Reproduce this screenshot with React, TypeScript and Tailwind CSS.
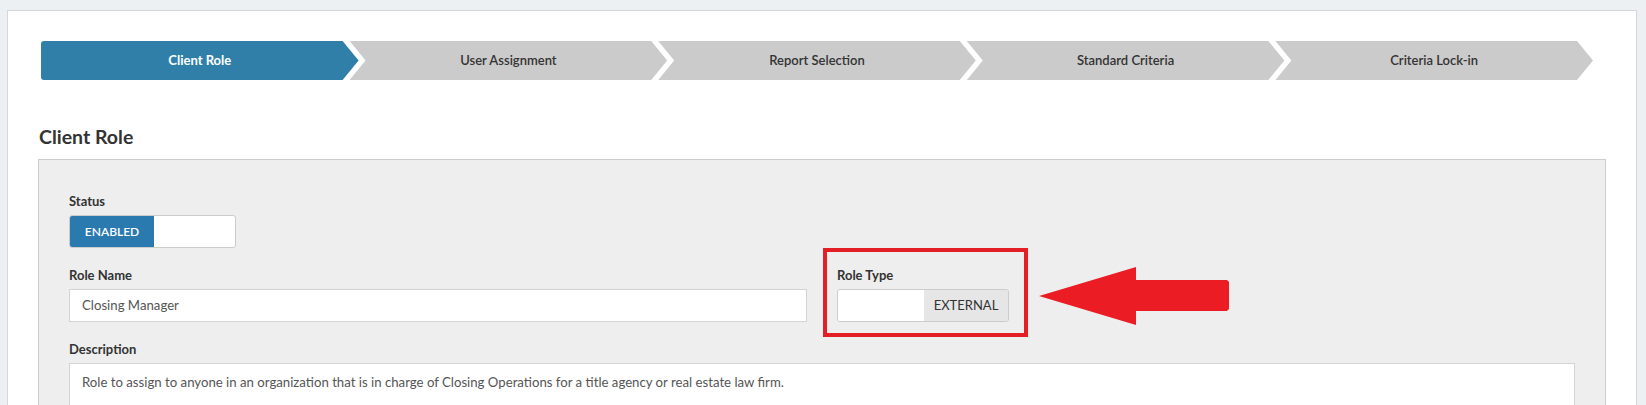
const FONT = { fontFamily: "Lato, 'Open Sans', Arial, sans-serif" };

const STEPS = [
  { label: "Client Role", cls: "bg-[#2f7fa9] text-white font-bold rounded-l-[3px] [clip-path:polygon(0_0,calc(100%_-_16px)_0,100%_50%,calc(100%_-_16px)_100%,0_100%)]" },
  { label: "User Assignment", cls: "bg-[#cbcbcb] text-[#333] font-semibold -ml-[9px] [clip-path:polygon(0_0,calc(100%_-_16px)_0,100%_50%,calc(100%_-_16px)_100%,0_100%,16px_50%)]" },
  { label: "Report Selection", cls: "bg-[#cbcbcb] text-[#333] font-semibold -ml-[9px] [clip-path:polygon(0_0,calc(100%_-_16px)_0,100%_50%,calc(100%_-_16px)_100%,0_100%,16px_50%)]" },
  { label: "Standard Criteria", cls: "bg-[#cbcbcb] text-[#333] font-semibold -ml-[9px] [clip-path:polygon(0_0,calc(100%_-_16px)_0,100%_50%,calc(100%_-_16px)_100%,0_100%,16px_50%)]" },
  { label: "Criteria Lock-in", cls: "bg-[#cbcbcb] text-[#333] font-semibold -ml-[9px] [clip-path:polygon(0_0,calc(100%_-_16px)_0,100%_50%,calc(100%_-_16px)_100%,0_100%,16px_50%)]" },
];

function Label({ children }: { children: React.ReactNode }) {
  return <div className="text-[13px] font-bold leading-[18px] text-[#333] mb-[5px]">{children}</div>;
}

export default function App() {
  return (
    <div className="min-h-screen bg-[#edf0f3] pl-[7px] pr-[9px] pt-[10px]" style={FONT}>
      <div className="bg-white border border-[#d3d8de] px-[30px] pt-[30px] min-h-[400px]">
        {/* Stepper */}
        <div className="flex h-[39px] ml-[3px] mr-[13px]">
          {STEPS.map((s) => (
            <div key={s.label} className={`flex-1 flex items-center justify-center text-[13px] ${s.cls}`}>
              {s.label}
            </div>
          ))}
        </div>

        <h2 className="mt-[45px] mb-[10px] ml-px text-[19.5px] leading-[24px] font-bold text-[#333]">Client Role</h2>

        {/* Panel */}
        <div className="bg-[#eeeeee] border border-[#cccccc] px-[30px] pt-[32px] pb-[20px]">
          <Label>Status</Label>
          <div className="flex w-[167px] h-[33px] border border-[#cccccc] rounded-[3px] overflow-hidden bg-white">
            <div className="w-[84px] bg-[#2a7ab0] text-white text-[12px] font-semibold flex items-center justify-center">ENABLED</div>
            <div className="flex-1" />
          </div>

          <div className="grid grid-cols-2 gap-x-[30px] mt-[18px]">
            <div>
              <Label>Role Name</Label>
              <div className="h-[33px] bg-white border border-[#d4d4d4] px-[12px] flex items-center text-[13.2px] text-[#555]">
                Closing Manager
              </div>
            </div>
            <div className="relative">
              <Label>Role Type</Label>
              <div className="flex w-[172px] h-[33px] border border-[#cccccc] rounded-[3px] overflow-hidden">
                <div className="w-[86px] bg-white" />
                <div className="flex-1 bg-[#e6e6e6] text-[13px] text-[#333] flex items-center justify-center">EXTERNAL</div>
              </div>
              {/* annotation */}
              <div className="absolute -left-[14px] -top-[18px] w-[205px] h-[89px] border-4 border-[#e31e25] pointer-events-none" />
              <svg className="absolute left-[202px] top-px" width="190" height="58" viewBox="0 0 190 58">
                <polygon points="0,29 97,0 97,13 188,13 190,15 190,42 188,44 97,44 97,58" fill="#ec1c24" />
              </svg>
            </div>
          </div>

          <div className="mt-[18px]">
            <Label>Description</Label>
            <div className="h-[70px] bg-white border border-[#d4d4d4] px-[12px] pt-[9px] text-[13.2px] text-[#555] leading-[18px]">
              Role to assign to anyone in an organization that is in charge of Closing Operations for a title agency or real estate law firm.
            </div>
          </div>
        </div>
      </div>
    </div>
  );
}
